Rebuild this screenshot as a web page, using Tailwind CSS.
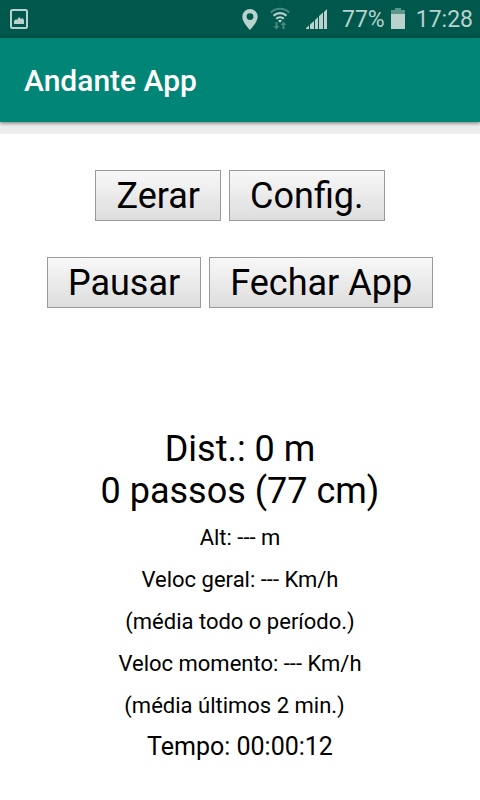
<!DOCTYPE html>
<html lang="pt-BR">
<head>
  <meta charset="UTF-8" />
  <meta name="viewport" content="width=device-width, initial-scale=1" />
  <title>Andante App</title>
  <!-- Tailwind CSS via CDN -->
  <script src="https://cdn.jsdelivr.net/npm/@tailwindcss/browser@4"></script>
</head>
<body class="min-h-screen bg-white text-black font-[Roboto,sans-serif]">
  <!-- Status bar -->
  <div class="flex h-[38px] items-center justify-between bg-[#00574b] pl-[7px] pr-[7px] text-[23px]/[38px] text-[#b9d2ce]">
    <svg class="size-6" viewBox="0 0 24 24" fill="none" aria-hidden="true">
      <rect x="4" y="3" width="16" height="18" rx="1.500" stroke="currentColor" stroke-width="2" />
      <path d="M7 17v-3l2-2 1 1 2-3 2 2 1.500-1 1.500 2v4z" fill="currentColor" />
    </svg>
    <div class="flex items-center">
      <!-- Location -->
      <svg class="mr-3 h-6 w-4" viewBox="0 0 16 24" aria-hidden="true">
        <path d="M8 2a7.700 7.700 0 0 0-7.700 7.700c0 5.500 7.700 13.300 7.700 13.300s7.700-7.800 7.700-13.300A7.700 7.700 0 0 0 8 2zm0 4.200a3.400 3.400 0 1 1 0 6.800 3.400 3.400 0 0 1 0-6.800z" fill="currentColor" fill-rule="evenodd" />
      </svg>
      <!-- Wi-Fi -->
      <svg class="mr-4 h-6 w-5" viewBox="0 0 20 24" fill="none" stroke="currentColor" stroke-width="2" aria-hidden="true">
        <path d="M.7 5.500c5.300-5 13.300-5 18.600 0" opacity=".4" />
        <path d="M3.500 8.700c3.700-3.500 9.300-3.500 13 0M6.200 11.800c2.200-2 5.400-2 7.600 0" stroke-width="2.200" />
        <path d="M8 13.500q2-1.300 4 0l-2 2.200z" fill="currentColor" stroke="none" />
        <path d="M5.500 15h2v4h2l-3 3.500-3-3.500h2zM12.500 22v-4h-2l3-3.500 3 3.500h-2v4z" fill="currentColor" stroke="none" opacity=".4" />
      </svg>
      <!-- Signal -->
      <svg class="mr-[14px] h-6 w-[22px]" viewBox="0 0 22 24" fill="currentColor" aria-hidden="true">
        <path d="M0 22v-1l3-2.500V22zM4 22v-4.500l4-3.500v8zM9 22v-9l3-3v12zM13 22V9l4-3.500V22zM18 22V5l3-3v20z" />
      </svg>
      <span class="mr-[6px] pt-[2px]">77%</span>
      <!-- Battery -->
      <svg class="mr-[11px] h-6 w-[14px]" viewBox="0 0 14 24" fill="currentColor" aria-hidden="true">
        <path d="M4 1h6v2h4v4H0V3h4z" opacity=".5" />
        <path d="M0 7h14v15H0z" />
      </svg>
      <span class="pt-[2px]">17:28</span>
    </div>
  </div>

  <!-- App bar -->
  <header class="relative flex h-[84px] items-center bg-[#008577] px-6 pt-[2px] shadow-[0_1px_4px_rgba(0,0,0,0.55)]">
    <h1 class="text-3xl font-medium text-white">Andante App</h1>
  </header>
  <div class="h-3 bg-[#eeeeee]"></div>

  <main class="text-center">
    <div class="flex justify-center gap-2 pt-9 text-4xl/[42px]">
      <button class="border border-[#9a9a9a] bg-linear-to-b from-[#f8f8f8] to-[#dddddd] px-5 pt-[4px] pb-[3px]">Zerar</button>
      <button class="border border-[#9a9a9a] bg-linear-to-b from-[#f8f8f8] to-[#dddddd] px-5 pt-[4px] pb-[3px]">Config.</button>
    </div>
    <div class="flex justify-center gap-2 pt-9 text-4xl/[42px]">
      <button class="border border-[#9a9a9a] bg-linear-to-b from-[#f8f8f8] to-[#dddddd] px-5 pt-[4px] pb-[3px]">Pausar</button>
      <button class="border border-[#9a9a9a] bg-linear-to-b from-[#f8f8f8] to-[#dddddd] px-5 pt-[4px] pb-[3px]">Fechar App</button>
    </div>
    <div class="mt-30 text-4xl/[42px]">
      <p>Dist.: 0 m</p>
      <p>0 passos (77 cm)</p>
    </div>
    <div class="mt-[5px] text-[22px]/[42px]">
      <p>Alt: --- m</p>
      <p>Veloc geral: --- Km/h</p>
      <p>(média todo o período.)</p>
      <p>Veloc momento: --- Km/h</p>
      <p>(média últimos 2 min.)&nbsp;&nbsp;</p>
    </div>
    <p class="text-[25px]/[40px]">Tempo: 00:00:12</p>
  </main>
</body>
</html>
